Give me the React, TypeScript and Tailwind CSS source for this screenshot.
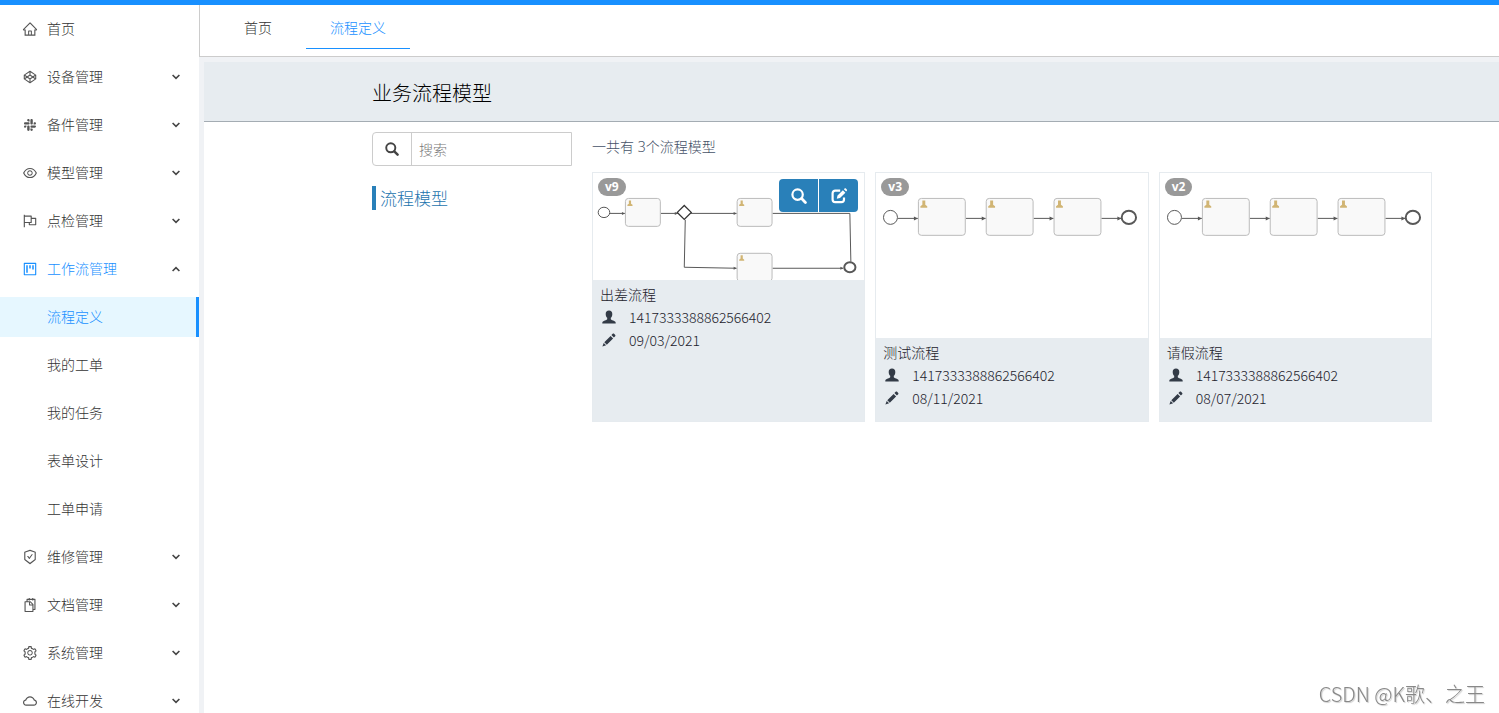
import type React from "react"
import type { IconType } from "react-icons"
import {
    AiOutlineCloud,
    AiOutlineCodepen,
    AiOutlineEye,
    AiOutlineFlag,
    AiOutlineHome,
    AiOutlineProject,
    AiOutlineSafetyCertificate,
    AiOutlineSetting,
    AiOutlineSlack,
    AiOutlineSnippets,
} from "react-icons/ai"

interface MenuItem {
    title: string
    icon: IconType
    children?: string[]
    leaf?: boolean
}

interface ProcessModel {
    version: string
    name: string
    owner: string
    date: string
    selected?: boolean
}

const menu: MenuItem[] = [
    { title: "首页", icon: AiOutlineHome, leaf: true },
    { title: "设备管理", icon: AiOutlineCodepen },
    { title: "备件管理", icon: AiOutlineSlack },
    { title: "模型管理", icon: AiOutlineEye },
    { title: "点检管理", icon: AiOutlineFlag },
    {
        title: "工作流管理",
        icon: AiOutlineProject,
        children: ["流程定义", "我的工单", "我的任务", "表单设计", "工单申请"],
    },
    { title: "维修管理", icon: AiOutlineSafetyCertificate },
    { title: "文档管理", icon: AiOutlineSnippets },
    { title: "系统管理", icon: AiOutlineSetting },
    { title: "在线开发", icon: AiOutlineCloud },
]

const models: ProcessModel[] = [
    { version: "v9", name: "出差流程", owner: "1417333388862566402", date: "09/03/2021", selected: true },
    { version: "v3", name: "测试流程", owner: "1417333388862566402", date: "08/11/2021" },
    { version: "v2", name: "请假流程", owner: "1417333388862566402", date: "08/07/2021" },
]

const SearchIcon: React.FC<{ className?: string }> = ({ className }) => (
    <svg viewBox="0 0 16 16" className={className} fill="none" stroke="currentColor" aria-hidden="true">
        <circle cx="6.6" cy="6.6" r="5.2" strokeWidth="2.2" />
        <path d="M10.6 10.6l3.8 3.8" strokeWidth="2.8" strokeLinecap="round" />
    </svg>
)

const EditIcon: React.FC<{ className?: string }> = ({ className }) => (
    <svg viewBox="0 0 16 16" className={className} aria-hidden="true">
        <path
            d="M9.2 2.6H4.2a2.6 2.6 0 0 0-2.6 2.6v6.4a2.6 2.6 0 0 0 2.6 2.6h6.2a2.6 2.6 0 0 0 2.6-2.6V9.4"
            fill="none"
            stroke="currentColor"
            strokeWidth="2.2"
        />
        <path d="M5.8 10.8l.7-3.2 5.4-5.4 2.5 2.5L9 10.1zM12.9 1.3l.7-.7c.4-.4.9-.4 1.3 0l.9.9c.4.4.4.9 0 1.3l-.7.7z" fill="currentColor" />
    </svg>
)

const UserIcon: React.FC<{ className?: string }> = ({ className }) => (
    <svg viewBox="0 0 14 14" className={className} fill="currentColor" aria-hidden="true">
        <path d="M7 .5c2.2 0 3.3 1.4 3.3 3.4 0 1.7-.5 3-1.5 3.9v1.4c.3.5 1.2.8 2.3 1.2 1.6.5 2.6 1.1 2.6 2.5v.6H.3v-.6c0-1.4 1-2 2.6-2.5 1.1-.4 2-.7 2.3-1.2V7.8c-1-.9-1.5-2.2-1.5-3.9C3.7 1.9 4.8.5 7 .5z" />
    </svg>
)

const PencilIcon: React.FC<{ className?: string }> = ({ className }) => (
    <svg viewBox="0 0 14 14" className={className} fill="currentColor" aria-hidden="true">
        <path d="M.4 13.6l1.3-3.7 2.4 2.4zM2.3 9.2l6.3-6.3 2.5 2.5-6.3 6.3zM9.4 2.1l1.3-1.3c.4-.4 1-.4 1.4 0l1.1 1.1c.4.4.4 1 0 1.4l-1.3 1.3z" />
    </svg>
)

const Chevron: React.FC<{ open?: boolean }> = ({ open }) => (
    <svg viewBox="0 0 8 6" className="ml-auto h-[6px] w-2" fill="none" stroke="#444" strokeWidth="1.6" aria-hidden="true">
        <path d={open ? "M.6 5L4 1.6 7.4 5" : "M.6 1L4 4.4 7.4 1"} />
    </svg>
)

const Task: React.FC<{ x: number; y: number; w: number; h: number }> = ({ x, y, w, h }) => (
    <g>
        <rect x={x} y={y} width={w} height={h} rx="3" fill="#f9f9f9" stroke="#bbb" />
        <path
            transform={`translate(${x + 2} ${y + 2}) scale(${w / 48})`}
            d="M2 0h3v4.5l2 1.5v1.500H0V6l2-1.500z"
            fill="#d1b574"
            stroke="none"
        />
    </g>
)

const BranchDiagram: React.FC = () => (
    <svg viewBox="0 0 272 107" className="block w-full" fill="none" stroke="#585858" aria-hidden="true">
        <path d="M17 40.5H32M68 40.5H85M98 40.5H144M180 40.5H257.5L258.5 89M92.5 47L91.5 94.5 144 95.5M180 95.5H251" />
        <path d="M29 39l3 1.5-3 1.5zM82 39l3 1.5-3 1.5zM141 39l3 1.5-3 1.5zM141 94l3 1.5-3 1.5zM248 94l3 1.5-3 1.5z" fill="#585858" stroke="none" />
        <ellipse cx="11" cy="39.5" rx="5.8" ry="5.2" fill="#fff" />
        <path d="M91.5 32.5l7 7-7 7-7-7z" fill="#fff" stroke="#333" strokeWidth="1.3" />
        <Task x={32.5} y={25.5} w={35} h={28} />
        <Task x={144.5} y={25.5} w={35} h={28} />
        <Task x={144.5} y={80.5} w={35} h={28} />
        <ellipse cx="257.5" cy="94.5" rx="5.6" ry="5" fill="#fff" strokeWidth="2" />
    </svg>
)

const LinearDiagram: React.FC = () => (
    <svg viewBox="0 0 272 165" className="block w-full" fill="none" stroke="#585858" aria-hidden="true">
        <path d="M22 45.5H42M90 45.5H110M158 45.5H178M226 45.5H246" />
        <path d="M38 43.5l4 2-4 2zM106 43.5l4 2-4 2zM174 43.5l4 2-4 2zM242 43.5l4 2-4 2z" fill="#585858" stroke="none" />
        <circle cx="14.5" cy="44.5" r="7" fill="#fff" />
        <Task x={42.5} y={25.5} w={47} h={37} />
        <Task x={110.5} y={25.5} w={47} h={37} />
        <Task x={178.5} y={25.5} w={47} h={37} />
        <ellipse cx="253.5" cy="44.5" rx="7.2" ry="6.6" fill="#fff" strokeWidth="2" />
    </svg>
)

const Sidebar: React.FC = () => (
    <aside className="w-[199px] shrink-0 bg-white font-['Noto_Sans','Noto_Sans_CJK_SC',sans-serif]">
        <nav>
            <ul>
                {menu.map((item) => {
                    const Icon = item.icon
                    const color = item.children ? "text-[#1890ff]" : "text-[#333]"
                    const iconClass = item.children ? "size-4" : "size-4 text-[#555]"
                    return (
                        <li key={item.title}>
                            {item.leaf ? (
                                <a href="#" className={`flex h-12 items-center gap-[9px] pl-[22px] ${color}`}>
                                    <Icon className={iconClass} />
                                    {item.title}
                                </a>
                            ) : (
                                <button
                                    type="button"
                                    aria-expanded={!!item.children}
                                    className={`flex h-12 w-full items-center gap-[9px] pr-[19px] pl-[22px] ${color}`}
                                >
                                    <Icon className={iconClass} />
                                    {item.title}
                                    <Chevron open={!!item.children} />
                                </button>
                            )}
                            {item.children && (
                                <ul>
                                    {item.children.map((child, index) => (
                                        <li key={child} className="py-1">
                                            <a
                                                href="#"
                                                className={
                                                    index === 0
                                                        ? "flex h-10 items-center border-r-3 border-[#1890ff] bg-[#e6f7ff] pl-[47px] text-[#1890ff]"
                                                        : "flex h-10 items-center pl-[47px] text-[#333]"
                                                }
                                            >
                                                {child}
                                            </a>
                                        </li>
                                    ))}
                                </ul>
                            )}
                        </li>
                    )
                })}
            </ul>
        </nav>
    </aside>
)

const ModelCard: React.FC<{ model: ProcessModel }> = ({ model }) => (
    <article className="relative flex flex-col border border-[#e6ebef] bg-[#e7ecf0]">
        <div className="bg-white">{model.selected ? <BranchDiagram /> : <LinearDiagram />}</div>
        <span className="absolute top-[5px] left-[5px] rounded-full bg-[#999] px-[7px] font-['Open_Sans',sans-serif] text-xs leading-[18px] font-bold text-white">
            {model.version}
        </span>
        {model.selected && (
            <div className="absolute top-[6px] right-[6px] flex gap-px">
                <button type="button" aria-label="查看" className="flex h-[33px] w-[39px] items-center justify-center rounded-l-sm bg-[#2980b9] text-white">
                    <SearchIcon className="size-4" />
                </button>
                <button type="button" aria-label="编辑" className="flex h-[33px] w-[39px] items-center justify-center rounded-r-sm bg-[#2980b9] text-white">
                    <EditIcon className="size-4" />
                </button>
            </div>
        )}
        <div className="px-[7px] pt-[3px] pb-[11px] leading-[23px] text-[#1c222c]">
            <h3>{model.name}</h3>
            <p className="flex items-center gap-[13px] pl-[2px]">
                <UserIcon className="size-[14px] text-[#333b47]" />
                {model.owner}
            </p>
            <p className="flex items-center gap-[13px] pl-[2px]">
                <PencilIcon className="size-[14px] text-[#333b47]" />
                {model.date}
            </p>
        </div>
    </article>
)

const App: React.FC = () => {
    return (
        <div className="h-screen overflow-hidden border-t-5 border-[#1890ff] bg-[#f0f2f5] font-['Noto_Sans_CJK_SC',sans-serif] text-sm font-light">
            <div className="flex h-full">
                <Sidebar />
                <div className="flex min-w-0 flex-1 flex-col">
                    <header className="flex h-[52px] shrink-0 border-b border-l border-[#ccc] bg-white pl-5">
                        <a href="#" className="flex h-[44px] items-center px-6 text-[#333]">
                            首页
                        </a>
                        <a href="#" className="ml-[10px] flex h-[44px] items-center border-b border-[#1890ff] px-6 text-[#1890ff]">
                            流程定义
                        </a>
                    </header>
                    <main className="mt-[5px] ml-[5px] flex-1 bg-white">
                        <div className="border-b border-[#a4acb3] bg-[#e7ecf0] pt-[3px] pl-[168px]">
                            <h1 className="text-xl leading-[56px] text-black">业务流程模型</h1>
                        </div>
                        <div className="flex gap-5 pt-[10px] pr-[67px] pl-[168px]">
                            <div className="w-[200px] shrink-0">
                                <div className="flex h-[34px] rounded-l-sm border border-[#ccc] text-[#444]">
                                    <label htmlFor="search" aria-label="搜索" className="flex w-[39px] items-center justify-center border-r border-[#ccc]">
                                        <SearchIcon className="size-[14px]" />
                                    </label>
                                    <input
                                        id="search"
                                        type="text"
                                        placeholder="搜索"
                                        className="min-w-0 flex-1 px-[7px] outline-none placeholder:text-[#777]"
                                    />
                                </div>
                                <a href="#" className="mt-5 block border-l-4 border-[#2980b9] pl-1 text-[17px] leading-6 text-[#1c74ae]">
                                    流程模型
                                </a>
                            </div>
                            <section className="min-w-0 flex-1">
                                <p className="mb-[10px] font-['Noto_Sans','Noto_Sans_CJK_SC',sans-serif] leading-[30px] text-[#465268]">
                                    一共有 3个流程模型
                                </p>
                                <div className="grid grid-cols-3 gap-[10px]">
                                    {models.map((model) => (
                                        <ModelCard key={model.version} model={model} />
                                    ))}
                                </div>
                            </section>
                        </div>
                    </main>
                </div>
            </div>
            <div className="fixed right-[14px] bottom-[5px] text-xl leading-7 text-[#888] text-shadow-[1px_1px_1px_#ccc]">CSDN @K歌、之王</div>
        </div>
    )
}

export default App
